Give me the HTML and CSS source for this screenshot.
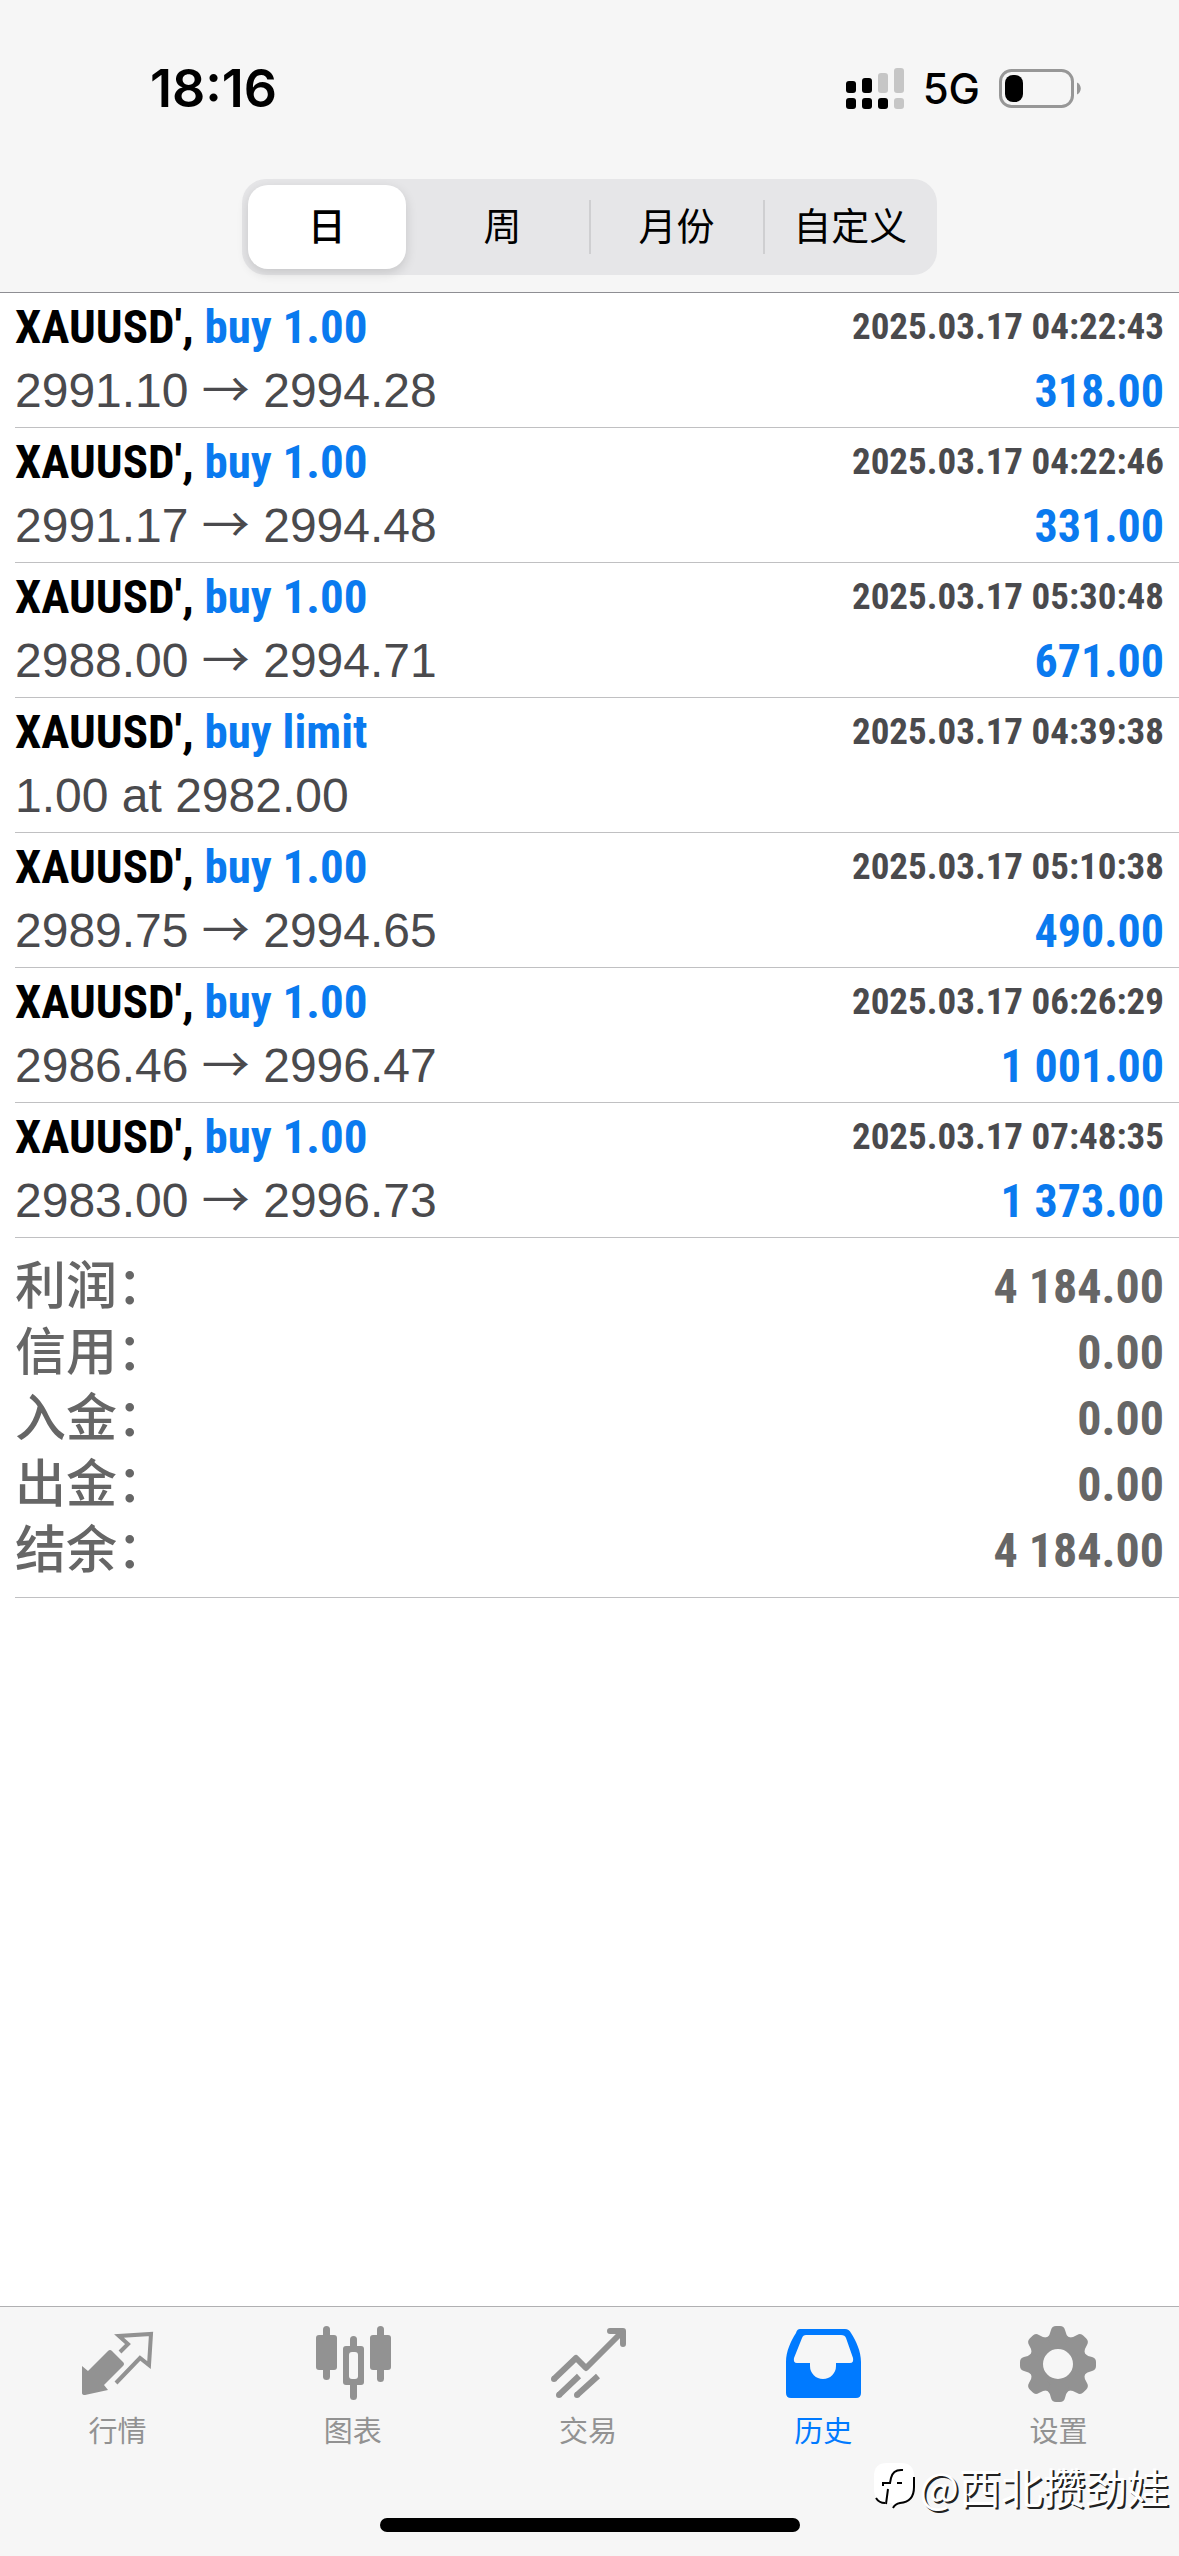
FILE: index.html
```html
<!DOCTYPE html>
<html lang="zh-CN">
<head>
<meta charset="utf-8">
<meta name="viewport" content="width=device-width, initial-scale=1">
<title>历史</title>
<link rel="stylesheet" href="styles.css">
</head>
<body>
<header class="top">
  <div class="status">
    <time class="clock">18:16</time>
    <div class="indicators">
      <svg class="signal" viewBox="0 0 58 42" width="58" height="42" aria-hidden="true">
        <g fill="#000">
          <rect x="0" y="13" width="10" height="12" rx="3"/>
          <rect x="16" y="10" width="10" height="15" rx="3"/>
          <rect x="0" y="30" width="10" height="11" rx="3"/>
          <rect x="16" y="30" width="10" height="11" rx="3"/>
          <rect x="32" y="30" width="10" height="11" rx="3"/>
        </g>
        <g fill="#c6c6c6">
          <rect x="32" y="5" width="10" height="20" rx="3"/>
          <rect x="48" y="0" width="10" height="25" rx="3"/>
          <rect x="48" y="30" width="10" height="11" rx="3"/>
        </g>
      </svg>
      <span class="network">5G</span>
      <svg class="battery" viewBox="0 0 82 40" width="82" height="40" aria-hidden="true">
        <rect x="1.5" y="1.5" width="72" height="36" rx="11" fill="none" stroke="#979797" stroke-width="3"/>
        <rect x="6" y="6" width="18" height="27" rx="8" fill="#000"/>
        <path d="M78 13.5c5 2 5 10 0 12z" fill="#979797"/>
      </svg>
    </div>
  </div>
  <div class="segments" role="group" aria-label="时间范围">
    <button class="segment segment-active" type="button" aria-pressed="true">日</button>
    <button class="segment" type="button">周</button>
    <button class="segment segment-divided" type="button">月份</button>
    <button class="segment segment-divided" type="button">自定义</button>
  </div>
</header>

<main class="content">
  <ul class="deals">
    <li class="deal">
      <div class="line"><span class="symbol">XAUUSD', <span class="side">buy 1.00</span></span><time class="date">2025.03.17 04:22:43</time></div>
      <div class="line"><span class="price">2991.10 <span class="arrow">→</span> 2994.28</span><span class="profit">318.00</span></div>
    </li>
    <li class="deal">
      <div class="line"><span class="symbol">XAUUSD', <span class="side">buy 1.00</span></span><time class="date">2025.03.17 04:22:46</time></div>
      <div class="line"><span class="price">2991.17 <span class="arrow">→</span> 2994.48</span><span class="profit">331.00</span></div>
    </li>
    <li class="deal">
      <div class="line"><span class="symbol">XAUUSD', <span class="side">buy 1.00</span></span><time class="date">2025.03.17 05:30:48</time></div>
      <div class="line"><span class="price">2988.00 <span class="arrow">→</span> 2994.71</span><span class="profit">671.00</span></div>
    </li>
    <li class="deal">
      <div class="line"><span class="symbol">XAUUSD', <span class="side">buy limit</span></span><time class="date">2025.03.17 04:39:38</time></div>
      <div class="line"><span class="price">1.00 at 2982.00</span></div>
    </li>
    <li class="deal">
      <div class="line"><span class="symbol">XAUUSD', <span class="side">buy 1.00</span></span><time class="date">2025.03.17 05:10:38</time></div>
      <div class="line"><span class="price">2989.75 <span class="arrow">→</span> 2994.65</span><span class="profit">490.00</span></div>
    </li>
    <li class="deal">
      <div class="line"><span class="symbol">XAUUSD', <span class="side">buy 1.00</span></span><time class="date">2025.03.17 06:26:29</time></div>
      <div class="line"><span class="price">2986.46 <span class="arrow">→</span> 2996.47</span><span class="profit">1 001.00</span></div>
    </li>
    <li class="deal">
      <div class="line"><span class="symbol">XAUUSD', <span class="side">buy 1.00</span></span><time class="date">2025.03.17 07:48:35</time></div>
      <div class="line"><span class="price">2983.00 <span class="arrow">→</span> 2996.73</span><span class="profit">1 373.00</span></div>
    </li>
  </ul>
  <dl class="summary">
    <div class="total"><dt>利润：</dt><dd>4 184.00</dd></div>
    <div class="total"><dt>信用：</dt><dd>0.00</dd></div>
    <div class="total"><dt>入金：</dt><dd>0.00</dd></div>
    <div class="total"><dt>出金：</dt><dd>0.00</dd></div>
    <div class="total"><dt>结余：</dt><dd>4 184.00</dd></div>
  </dl>
</main>

<footer class="bottom">
  <nav class="tabs">
    <a class="tab" href="#quotes">
      <svg class="tab-icon" viewBox="0 0 76 76" aria-hidden="true">
        <path d="M2 40 8 45 28 25Q30 23 32 25L43 36Q45 38 43 40L24 59 28 64 5 69Q2 69 2 67Z" fill="#929292"/>
        <path d="M40 26 48 18 39 10 71 8 69 39 60 32 36 57" fill="none" stroke="#929292" stroke-width="4"/>
      </svg>
      <span>行情</span>
    </a>
    <a class="tab" href="#charts">
      <svg class="tab-icon" viewBox="0 0 76 76" aria-hidden="true">
        <g fill="#929292">
          <rect x="8" y="0" width="7" height="54" rx="3.5"/><rect x="1" y="9" width="21" height="35" rx="3"/>
          <rect x="62" y="0" width="7" height="56" rx="3.5"/><rect x="55" y="9" width="21" height="35" rx="3"/>
          <rect x="35" y="10" width="7" height="64" rx="3.5"/><rect x="28" y="20" width="21" height="39" rx="3"/>
        </g>
        <rect x="34" y="26" width="9" height="27" rx="3" fill="#f6f6f6"/>
      </svg>
      <span>图表</span>
    </a>
    <a class="tab" href="#trade">
      <svg class="tab-icon" viewBox="0 0 76 76" aria-hidden="true">
        <g fill="none" stroke="#929292" stroke-width="6">
          <path d="M4 53 26 32 36 42 71 7" stroke-linejoin="round"/>
          <path d="M60 5H73V18" stroke-linecap="round" stroke-linejoin="round"/>
          <path d="M9 69 29 50M27 69 48 50"/>
        </g>
        <g fill="#929292"><circle cx="4" cy="53" r="3"/><circle cx="9" cy="69" r="3"/><circle cx="27" cy="69" r="3"/></g>
      </svg>
      <span>交易</span>
    </a>
    <a class="tab tab-active" href="#history" aria-current="page">
      <svg class="tab-icon" viewBox="0 0 76 76" aria-hidden="true">
        <path fill="#007aff" fill-rule="evenodd" d="M15 3H60Q64 3 66 7C71 15 76 25 76 36V67Q76 72 71 72H6Q1 72 1 67V36C1 25 6 15 11 7Q12 3 15 3ZM21 9Q18 9 17 12L9 32Q8 37 12 37H25V40A13 13 0 0 0 51 40V37H65Q69 37 68 32L61 12Q60 9 56 9Z"/>
      </svg>
      <span>历史</span>
    </a>
    <a class="tab" href="#settings">
      <svg class="tab-icon" viewBox="0 0 76 76" aria-hidden="true">
        <g fill="#929292">
          <circle cx="38" cy="38" r="22" fill="none" stroke="#929292" stroke-width="14"/>
          <g id="teeth">
            <path id="tooth" d="M27 12Q30 9 31 4Q32 0 36 0H40Q44 0 45 4Q46 9 49 12L47 18H29Z"/>
            <use href="#tooth" transform="rotate(45 38 38)"/>
            <use href="#tooth" transform="rotate(90 38 38)"/>
            <use href="#tooth" transform="rotate(135 38 38)"/>
          </g>
          <use href="#teeth" transform="rotate(180 38 38)"/>
        </g>
      </svg>
      <span>设置</span>
    </a>
  </nav>
  <div class="home-indicator"></div>
  <div class="watermark">
    <svg class="watermark-logo" viewBox="0 0 44 50" width="44" height="50" aria-hidden="true">
      <path d="M14 2H28Q41 2 41 15V26Q41 41 26 42Q22 43 21 48L19 42H14Q1 41 1 28V15Q1 2 14 2Z" fill="#fff"/>
      <path d="M41 16V26Q41 41 27 42Q22 43 20 47M3 37Q6 42 12 42M30 9Q20 8 18 17L17 22H10V25M24 22H29M15 28 13 43" fill="none" stroke="#000" stroke-width="2"/>
    </svg>
    <span>@西北攒劲娃</span>
  </div>
</footer>
</body>
</html>
```
FILE: styles.css
```css
* {
  box-sizing: border-box;
}

body {
  margin: 0;
  min-height: 100vh;
  display: flex;
  flex-direction: column;
  background: #fff;
  color: #000;
  font-family: "Liberation Sans", "Noto Sans CJK SC", sans-serif;
}

.top {
  background: #f6f6f6;
  border-bottom: 1px solid #8e8e93;
  padding-bottom: 17px;
}

.status {
  display: flex;
  justify-content: space-between;
  align-items: center;
  height: 179px;
  padding: 0 98px 2px 150px;
}

.clock {
  font: 600 52px/60px Inter, sans-serif;
}

.indicators {
  display: flex;
  align-items: center;
  gap: 19px;
}

.network {
  font: 500 42px/50px Inter, sans-serif;
}

.segments {
  display: grid;
  grid-template-columns: repeat(4, 1fr);
  width: 59%;
  height: 96px;
  margin: 0 auto;
  padding: 6px 0;
  border-radius: 24px;
  background: #e6e6e8;
}

.segment {
  display: flex;
  align-items: center;
  justify-content: center;
  border: 0;
  border-radius: 20px;
  padding: 0;
  background: none;
  color: #000;
  font: 400 38px/56px "Liberation Sans", "Noto Sans CJK SC", sans-serif;
}

.segment-active {
  margin: 0 10px 0 6px;
  background: #fff;
  box-shadow: 0 4px 12px rgba(0, 0, 0, 0.14);
  font-weight: 500;
}

.segment-divided {
  background: linear-gradient(#cfcfd1, #cfcfd1) left center / 2px 54px no-repeat;
  border-radius: 0;
}

.deals {
  list-style: none;
  margin: 0;
  padding: 0 0 0 15px;
}

.deal {
  padding: 2px 15px 4px 0;
  border-bottom: 1px solid #c0c0c2;
}

.line {
  display: flex;
  justify-content: space-between;
  align-items: center;
  height: 64px;
  white-space: nowrap;
}

.symbol,
.profit {
  font: 700 46px/64px "Roboto Condensed", Roboto, sans-serif;
}

.symbol {
  font-size: 47px;
}

.side,
.profit {
  color: #0a7aef;
}

.date {
  color: #4a4a4d;
  font: 700 37px/64px "Roboto Condensed", Roboto, sans-serif;
}

.price {
  color: #4a4a4d;
  font-size: 48px;
  line-height: 64px;
}

.arrow {
  font-family: "Noto Sans CJK SC", sans-serif;
  line-height: 1;
}

.summary {
  margin: 0 0 0 15px;
  padding: 16px 15px 13px 0;
  border-bottom: 1px solid #c0c0c2;
  color: #666;
}

.total {
  display: flex;
  justify-content: space-between;
  align-items: center;
  height: 66px;
}

.total dt {
  font: 500 51px/66px "Liberation Sans", "Noto Sans CJK SC", sans-serif;
}

.total dd {
  margin: 0;
  font: 700 48px/66px "Roboto Condensed", Roboto, sans-serif;
}

.bottom {
  position: relative;
  margin-top: auto;
  padding-bottom: 24px;
  background: #f6f6f6;
  border-top: 1px solid #b0b0b2;
}

.tabs {
  display: grid;
  grid-template-columns: repeat(5, 1fr);
  height: 211px;
  padding-right: 3px;
}

.tab {
  display: flex;
  flex-direction: column;
  align-items: center;
  gap: 10px;
  padding-top: 19px;
  color: #929292;
  font: 400 29px/40px "Liberation Sans", "Noto Sans CJK SC", sans-serif;
  text-decoration: none;
}

.tab-active {
  color: #007aff;
}

.tab-icon {
  width: 76px;
  height: 76px;
}

.home-indicator {
  width: 420px;
  height: 14px;
  margin: 0 auto;
  border-radius: 7px;
  background: #000;
}

.watermark {
  position: absolute;
  right: 10px;
  bottom: 40px;
  display: flex;
  align-items: center;
  gap: 2px;
  color: #fff;
  font: 400 42px/60px "Noto Sans CJK SC", sans-serif;
  text-shadow: 2px 2px 0 #222;
}
```
